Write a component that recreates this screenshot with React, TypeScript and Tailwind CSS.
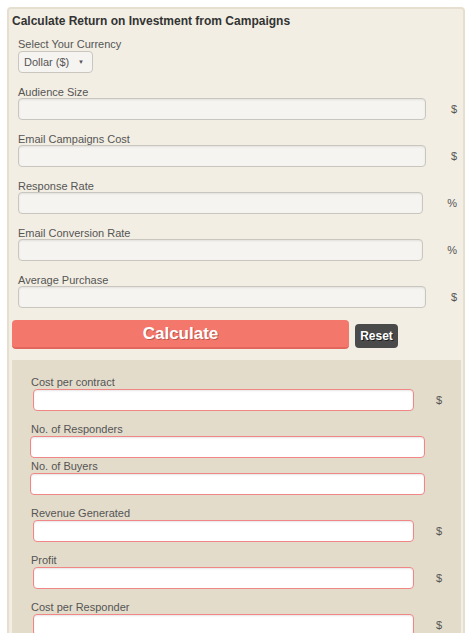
import React from "react";

const font = { fontFamily: '"Liberation Sans", Arial, sans-serif' };

function Field({ label, unit, narrow }: { label: string; unit: string; narrow?: boolean }) {
  return (
    <div className="flex flex-col">
      <div className="text-[11px] leading-[12px] text-[#555]">{label}</div>
      <div className="flex items-center">
        <input
          className={`${narrow ? "w-[405px]" : "w-[408px]"} h-[22px] shrink-0 rounded-[4px] border border-[#c9c6bf] bg-[#f5f4f1] shadow-[inset_0_1px_2px_rgba(0,0,0,0.08)] outline-none`}
        />
        <div className="flex-1 pr-[6px] text-right text-[11px] text-[#555]">{unit}</div>
      </div>
    </div>
  );
}

function ResultField({ label, unit, wide }: { label: string; unit?: string; wide?: boolean }) {
  return (
    <div className="flex flex-col">
      <div className="text-[11px] leading-[13px] text-[#555]">{label}</div>
      <div className="flex items-center">
        <input
          className={`${wide ? "ml-[-1px] w-[395px]" : "ml-[2px] w-[381px]"} h-[22px] shrink-0 rounded-[4px] border border-[#f08686] bg-white shadow-[inset_0_1px_2px_rgba(0,0,0,0.1)] outline-none`}
        />
        {unit ? <div className="flex-1 pr-[19px] text-right text-[11px] text-[#555]">{unit}</div> : null}
      </div>
    </div>
  );
}

export default function App() {
  return (
    <div className="min-h-screen bg-white pt-[7px] pl-[7px]" style={font}>
      <div className="w-[458px] rounded-[4px] border-2 border-[#e6dfd0] bg-[#f2eee3] pt-[5px] pb-[10px]">
        <div className="pl-[3px] text-[12px] font-bold leading-[14px] text-[#333]">
          Calculate Return on Investment from Campaigns
        </div>
        <div className="mt-[10px] flex flex-col gap-[13px] pl-[9px]">
          <div className="flex flex-col">
            <div className="text-[11px] leading-[13px] text-[#555]">Select Your Currency</div>
            <div className="flex h-[22px] w-[75px] items-center justify-between rounded-[4px] border border-[#c9c6bf] bg-[#f6f4f0] pl-[5px] pr-[8px] text-[11px] text-[#555]">
              <span>Dollar ($)</span>
              <span className="text-[6px] leading-none">▼</span>
            </div>
          </div>
          <Field label="Audience Size" unit="$" />
          <Field label="Email Campaigns Cost" unit="$" />
          <Field label="Response Rate" unit="%" narrow />
          <Field label="Email Conversion Rate" unit="%" narrow />
          <Field label="Average Purchase" unit="$" />
        </div>
        <div className="mt-[12px] flex items-end pl-[3px]">
          <button className="h-[29px] w-[337px] rounded-[4px] border-b-2 border-[#e2665b] bg-[#f4776b] text-[17px] font-bold text-white [text-shadow:1px_1px_0_rgba(0,0,0,0.25)]">
            Calculate
          </button>
          <button className="mb-[1px] ml-[6px] h-[24px] w-[43px] rounded-[4px] bg-[#4a4a4a] text-[12px] font-bold text-white [text-shadow:1px_1px_0_rgba(0,0,0,0.6)]">
            Reset
          </button>
        </div>
        <div className="ml-[3px] mt-[11px] w-[449px] bg-[#e3dccb] pl-[19px] pt-[16px] pb-[20px]">
          <ResultField label="Cost per contract" unit="$" />
          <div className="mt-[12px]">
            <ResultField label="No. of Responders" wide />
          </div>
          <div className="mt-[2px]">
            <ResultField label="No. of Buyers" wide />
          </div>
          <div className="mt-[12px]">
            <ResultField label="Revenue Generated" unit="$" />
          </div>
          <div className="mt-[12px]">
            <ResultField label="Profit" unit="$" />
          </div>
          <div className="mt-[12px]">
            <ResultField label="Cost per Responder" unit="$" />
          </div>
        </div>
      </div>
    </div>
  );
}
